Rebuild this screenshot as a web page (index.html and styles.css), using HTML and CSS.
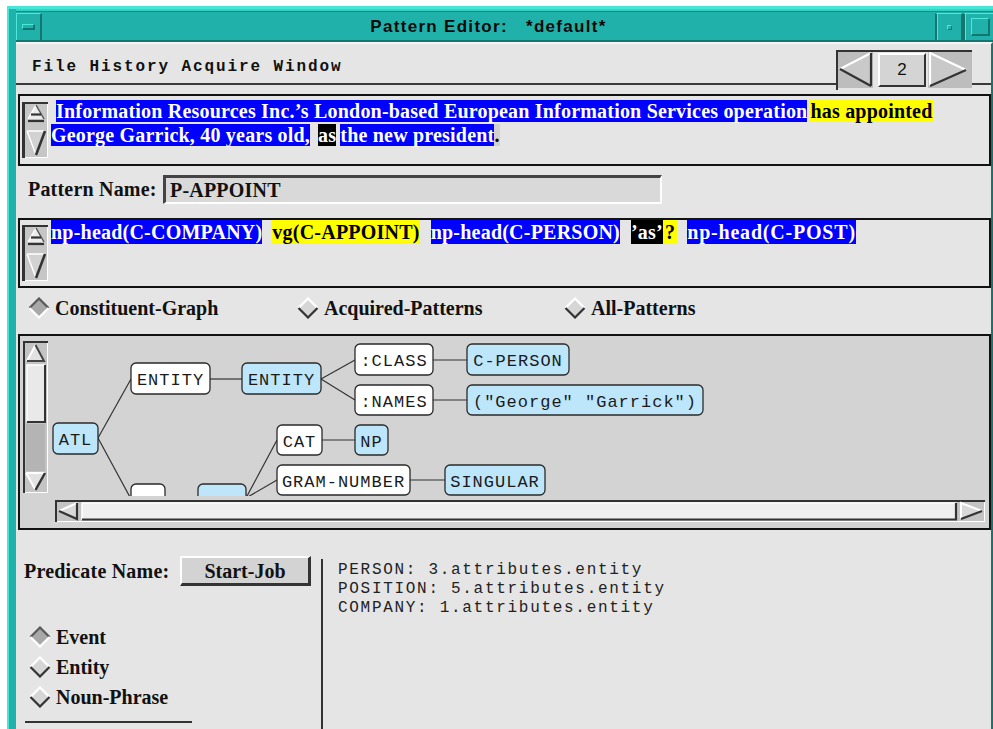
FILE: index.html
```html
<!DOCTYPE html>
<html>
<head>
<meta charset="utf-8">
<title>Pattern Editor</title>
<link rel="stylesheet" href="styles.css">
</head>
<body>
<svg class="sprite" width="0" height="0">
  <defs>
    <symbol id="radio-on" viewBox="0 0 22 22">
      <polygon points="11,1 21,11 11,21 1,11" fill="#a8a8a8"/>
      <path d="M1.5 11L11 1.5L20.5 11" stroke="#5a5a5a" stroke-width="2.2" fill="none"/>
      <path d="M1.5 11L11 20.5L20.5 11" stroke="#ffffff" stroke-width="2.2" fill="none"/>
    </symbol>
    <symbol id="radio-off" viewBox="0 0 22 22">
      <polygon points="11,1 21,11 11,21 1,11" fill="#d6d6d6"/>
      <path d="M1.5 11L11 1.5L20.5 11" stroke="#ffffff" stroke-width="2.2" fill="none"/>
      <path d="M1.5 11L11 20.5L20.5 11" stroke="#333333" stroke-width="2.2" fill="none"/>
    </symbol>
    <symbol id="text-scroll" viewBox="0 0 26 56">
      <rect x="0" y="0" width="26" height="56" fill="#c6c6c6"/>
      <path d="M0 1H26" stroke="#333" stroke-width="2"/>
      <path d="M1.5 0V56" stroke="#333" stroke-width="3"/>
      <path d="M25.5 2V56M3 55.5H26" stroke="#fff" stroke-width="1"/>
      <polygon points="14,3 6,17 22,17" fill="#ececec"/>
      <path d="M6 17L14 3" stroke="#fff" stroke-width="1.5"/>
      <path d="M14 3L22 17" stroke="#555" stroke-width="1.5"/>
      <path d="M9 12.5H19" stroke="#333" stroke-width="2.2"/>
      <path d="M6 19H22" stroke="#333" stroke-width="2.2"/>
      <polygon points="5,29 23,29 14,53" fill="#d2d2d2"/>
      <path d="M5 29H23M5 29L14 53" stroke="#fff" stroke-width="1.5" fill="none"/>
      <path d="M23 29L14 53" stroke="#333" stroke-width="2.6"/>
    </symbol>
  </defs>
</svg>

<div class="window">
  <header class="titlebar">
    <div class="tb-btn tb-menu"><span class="tb-bar"></span></div>
    <div class="tb-title">Pattern Editor:&nbsp;&nbsp;&nbsp;*default*</div>
    <div class="tb-btn tb-min"><span class="tb-dot"></span></div>
    <div class="tb-btn tb-max"><span class="tb-square"></span></div>
  </header>

  <main class="panel">
    <div class="menubar">
      <nav class="menu">File History Acquire Window</nav>
      <div class="pager">
        <div class="pager-arrow prev">
          <svg width="35" height="36" viewBox="0 0 35 36">
            <polygon points="2,17 33,1 33,34" fill="#c9c9c9"/>
            <path d="M2 17L33 1" stroke="#fff" stroke-width="2"/>
            <path d="M2 17L33 34M33 1V34" stroke="#333" stroke-width="2.2" fill="none"/>
          </svg>
        </div>
        <div class="pager-num">2</div>
        <div class="pager-arrow next">
          <svg width="44" height="36" viewBox="0 0 44 36">
            <polygon points="2,1 38,18 2,34" fill="#c9c9c9"/>
            <path d="M2 34V1L38 18" stroke="#fff" stroke-width="2.2" fill="none"/>
            <path d="M38 18L2 34" stroke="#333" stroke-width="2.2"/>
          </svg>
        </div>
      </div>
    </div>

    <section class="textbox sentence">
      <svg class="tscroll" width="26" height="56"><use href="#text-scroll"/></svg>
      <div class="sentence-text">
        <div class="line"><span class="hl blue lead">Information Resources Inc.’s London-based European Information Services operation</span><span class="hl yellow gap-3">has appointed</span></div>
        <div class="line"><span class="hl blue">George Garrick, 40 years old,</span><span class="hl black gap-8">as</span><span class="hl blue gap-4">the new president</span><span class="hl gray">.</span></div>
      </div>
    </section>

    <div class="name-row">
      <label class="field-label">Pattern Name:</label>
      <div class="field-input">P-APPOINT</div>
    </div>

    <section class="textbox pattern">
      <svg class="tscroll" width="26" height="56"><use href="#text-scroll"/></svg>
      <div class="pattern-items">
        <span class="hl blue">np-head(C-COMPANY)</span>
        <span class="hl yellow gap-10">vg(C-APPOINT)</span>
        <span class="hl blue gap-11">np-head(C-PERSON)</span>
        <span class="hl black gap-11">’as’</span>
        <span class="hl yellow optional">?</span>
        <span class="hl blue gap-10 wide">np-head(C-POST)</span>
      </div>
    </section>

    <div class="view-row">
      <div class="radio"><svg class="diamond" width="22" height="22"><use href="#radio-on"/></svg><span>Constituent-Graph</span></div>
      <div class="radio"><svg class="diamond" width="22" height="22"><use href="#radio-off"/></svg><span>Acquired-Patterns</span></div>
      <div class="radio"><svg class="diamond" width="22" height="22"><use href="#radio-off"/></svg><span>All-Patterns</span></div>
    </div>

    <section class="graph">
      <div class="graph-top">
        <svg class="vscroll" width="25" height="152" viewBox="0 0 25 152">
          <rect x="0" y="0" width="25" height="152" fill="#c4c4c4"/>
          <path d="M0 1H25M1 0V152" stroke="#333" stroke-width="2"/>
          <path d="M24.5 2V152M2 151.5H25" stroke="#fff"/>
          <polygon points="12.5,4 4,20 21,20" fill="#e2e2e2"/>
          <path d="M4 20L12.5 4" stroke="#fff" stroke-width="2"/>
          <path d="M12.5 4L21 20H4" stroke="#444" stroke-width="2" fill="none"/>
          <rect x="4" y="24" width="18" height="57" fill="#e9e9e9"/>
          <path d="M4 81V24H22" stroke="#fff" stroke-width="1.5" fill="none"/>
          <path d="M4 81H22V24" stroke="#333" stroke-width="2" fill="none"/>
          <rect x="3" y="83" width="19" height="47" fill="#b4b4b4"/>
          <polygon points="3,132 22,132 12.5,149" fill="#e2e2e2"/>
          <path d="M3 132H22M3 132L12.5 149" stroke="#fff" stroke-width="2" fill="none"/>
          <path d="M22 132L12.5 149" stroke="#333" stroke-width="2.4"/>
        </svg>
        <div class="canvas">
          <svg class="tree" width="939" height="160" viewBox="0 0 939 160">
            <g class="edges">
              <path d="M48 102L81 43"/>
              <path d="M48 102L81 163"/>
              <path d="M160 43H192"/>
              <path d="M271 43L305 24"/>
              <path d="M271 43L305 64"/>
              <path d="M383 24H417"/>
              <path d="M383 64H417"/>
              <path d="M196 162L227 104"/>
              <path d="M196 162L227 144"/>
              <path d="M272 104H305"/>
              <path d="M360 144H395"/>
            </g>
            <g class="node value"><rect x="3" y="87" width="45" height="31" rx="5"/><text x="25.5" y="109">ATL</text></g>
            <g class="node key"><rect x="81" y="27" width="79" height="31" rx="5"/><text x="120.5" y="49">ENTITY</text></g>
            <g class="node value"><rect x="192" y="27" width="79" height="31" rx="5"/><text x="231.5" y="49">ENTITY</text></g>
            <g class="node key"><rect x="305" y="8" width="78" height="31" rx="5"/><text x="344" y="30">:CLASS</text></g>
            <g class="node value"><rect x="417" y="8" width="102" height="31" rx="5"/><text x="468" y="30">C-PERSON</text></g>
            <g class="node key"><rect x="305" y="49" width="78" height="30" rx="5"/><text x="344" y="71">:NAMES</text></g>
            <g class="node value"><rect x="417" y="49" width="236" height="30" rx="5"/><text x="535" y="71">("George" "Garrick")</text></g>
            <g class="node key"><rect x="227" y="89" width="45" height="30" rx="5"/><text x="249.5" y="111">CAT</text></g>
            <g class="node value"><rect x="305" y="89" width="33" height="30" rx="5"/><text x="321.5" y="111">NP</text></g>
            <g class="node key"><rect x="227" y="129" width="133" height="30" rx="5"/><text x="293.5" y="151">GRAM-NUMBER</text></g>
            <g class="node value"><rect x="395" y="129" width="100" height="30" rx="5"/><text x="445" y="151">SINGULAR</text></g>
            <g class="node key"><rect x="81" y="148" width="34" height="30" rx="5"/></g>
            <g class="node value"><rect x="148" y="148" width="48" height="30" rx="5"/></g>
          </svg>
        </div>
      </div>
      <svg class="hscroll" width="930" height="22" viewBox="0 0 930 22">
        <rect x="0" y="0" width="930" height="22" fill="#c4c4c4"/>
        <path d="M0 1H930M1 0V22" stroke="#333" stroke-width="2"/>
        <path d="M929.5 2V22M2 21.5H930" stroke="#fff"/>
        <polygon points="4,11 22,3 22,19" fill="#d8d8d8"/>
        <path d="M4 11L22 3" stroke="#fff" stroke-width="2"/>
        <path d="M4 11L22 19V3" stroke="#333" stroke-width="2.2" fill="none"/>
        <rect x="27" y="3" width="874" height="17" fill="#efefef"/>
        <path d="M27 20V3H901" stroke="#fff" stroke-width="1.5" fill="none"/>
        <path d="M27 19.5H901V3" stroke="#333" stroke-width="2.2" fill="none"/>
        <polygon points="906,3 927,11 906,19" fill="#d8d8d8"/>
        <path d="M906 19V3L927 11" stroke="#fff" stroke-width="2" fill="none"/>
        <path d="M927 11L906 19" stroke="#333" stroke-width="2.2"/>
      </svg>
    </section>

    <div class="lower">
      <div class="lower-left">
        <div class="pred-row">
          <span class="field-label pred-label">Predicate Name:</span>
          <button class="btn">Start-Job</button>
        </div>
        <div class="radio-list">
          <div class="radio"><svg class="diamond" width="22" height="22"><use href="#radio-on"/></svg><span>Event</span></div>
          <div class="radio"><svg class="diamond" width="22" height="22"><use href="#radio-off"/></svg><span>Entity</span></div>
          <div class="radio"><svg class="diamond" width="22" height="22"><use href="#radio-off"/></svg><span>Noun-Phrase</span></div>
        </div>
        <div class="rule"></div>
      </div>
      <pre class="bindings">PERSON: 3.attributes.entity
POSITION: 5.attributes.entity
COMPANY: 1.attributes.entity</pre>
    </div>
  </main>
</div>
</body>
</html>
```

FILE: styles.css
```css
* { box-sizing: border-box; }

html, body {
  margin: 0;
  padding: 0;
}

body {
  background: #ffffff;
  width: 993px;
  height: 729px;
  overflow: hidden;
}

.sprite {
  display: block;
  width: 0;
  height: 0;
  overflow: hidden;
}

/* ---------- window frame ---------- */
.window {
  margin: 6px 0 0 7px;
  width: 986px;
  height: 723px;
  background: #20b2aa;
  border-top: 3px solid #48e6d8;
  border-left: 2px solid #48e6d8;
  padding-left: 7px;
  display: flex;
  flex-direction: column;
}

.titlebar {
  height: 33px;
  flex: none;
  display: flex;
  border-bottom: 2px solid #15756f;
  box-shadow: inset 0 2px 0 #33d2c5, inset 0 3px 0 #178a83;
}

.tb-btn {
  margin-top: 4px;
  display: flex;
  align-items: center;
  justify-content: center;
  border-top: 1px solid #4ce8da;
  border-left: 1px solid #4ce8da;
  border-right: 2px solid #15756f;
}

.tb-menu { width: 26px; }
.tb-min { width: 28px; border-left: 2px solid #15756f; box-shadow: inset 1px 0 0 #4ce8da; }
.tb-max { width: 30px; border-left: 2px solid #15756f; border-right: none; box-shadow: inset 1px 0 0 #4ce8da; }

.tb-bar {
  width: 13px;
  height: 6px;
  background: #20b2aa;
  border-top: 1px solid #4ce8da;
  border-left: 1px solid #4ce8da;
  border-bottom: 2px solid #15756f;
  border-right: 2px solid #15756f;
}

.tb-dot {
  width: 5px;
  height: 5px;
  border-top: 1px solid #4ce8da;
  border-left: 1px solid #4ce8da;
  border-bottom: 1px solid #15756f;
  border-right: 1px solid #15756f;
}

.tb-square {
  width: 19px;
  height: 18px;
  margin-left: 2px;
  border-top: 1px solid #4ce8da;
  border-left: 1px solid #4ce8da;
  border-bottom: 2px solid #15756f;
  border-right: 2px solid #15756f;
}

.tb-title {
  flex: 1;
  text-align: center;
  padding-top: 8px;
  font: bold 17px/20px "Liberation Sans", Arial, sans-serif;
  letter-spacing: 1.3px;
  color: #0a0a0a;
  white-space: nowrap;
}

/* ---------- content panel ---------- */
.panel {
  flex: 1;
  background: #e5e5e5;
  border-top: 2px solid #f6f6f6;
  border-right: 2px solid #15756f;
  display: flex;
  flex-direction: column;
  color: #111;
}

.menubar {
  height: 41px;
  flex: none;
  display: flex;
  align-items: flex-start;
  border-bottom: 2px solid #3a3a3a;
}

.menu {
  padding: 4px 0 0 16px;
  font: bold 16px/39px "Liberation Mono", "Courier New", monospace;
  letter-spacing: 1.9px;
  color: #111;
  white-space: pre;
}

.pager {
  margin: 6px 19px 0 auto;
  width: 136px;
  height: 40px;
  flex: none;
  display: flex;
  align-items: flex-start;
  background: #e5e5e5;
  border-top: 2px solid #333;
  border-left: 2px solid #333;
}

.pager-arrow {
  height: 36px;
  background: #bdbdbd;
}
.pager-arrow svg { display: block; }
.pager-arrow.prev { width: 35px; }
.pager-arrow.next { width: 44px; margin-left: 2px; }

.pager-num {
  margin: 1px 0 0 5px;
  width: 48px;
  height: 34px;
  background: #d4d4d4;
  border-top: 2px solid #fff;
  border-left: 2px solid #fff;
  border-bottom: 2px solid #333;
  border-right: 2px solid #333;
  text-align: center;
  font: 17px/30px "Liberation Sans", Arial, sans-serif;
  color: #111;
}

/* ---------- text boxes ---------- */
.textbox {
  margin-left: 2px;
  border: 2px solid #111;
  display: flex;
  align-items: flex-start;
  flex: none;
}

.tscroll { flex: none; display: block; margin-left: 2px; }

.sentence { margin-top: 9px; height: 72px; }
.sentence .tscroll { margin-top: 6px; }

.sentence-text {
  margin-left: 3px;
  padding-top: 3px;
  font: bold 20px/24px "Liberation Serif", "Times New Roman", serif;
  letter-spacing: 0.2px;
  white-space: nowrap;
}

.pattern { height: 70px; }
.pattern .tscroll { margin-top: 5px; }

.pattern-items {
  margin-left: 3px;
  display: flex;
  align-items: center;
  height: 24px;
  font: bold 20px/24px "Liberation Serif", "Times New Roman", serif;
  letter-spacing: 0.22px;
  white-space: nowrap;
}

.hl { padding: 0; }
.hl.blue { background: #0000ff; color: #fff; }
.hl.yellow { background: #ffff00; color: #000; }
.hl.black { background: #000; color: #fff; }
.hl.gray { background: #d0d0d0; color: #000; }

.hl.optional { padding: 0 2px; }
.hl.wide { letter-spacing: 0.8px; }

.lead { margin-left: 5px; }
.gap-3 { margin-left: 3px; }
.gap-4 { margin-left: 4px; }
.gap-8 { margin-left: 8px; }
.gap-10 { margin-left: 10px; }
.gap-11 { margin-left: 11px; }

/* ---------- pattern name ---------- */
.name-row {
  height: 52px;
  flex: none;
  display: flex;
  align-items: flex-start;
  padding: 9px 0 0 12px;
}

.field-label {
  font: bold 20px/29px "Liberation Serif", "Times New Roman", serif;
  letter-spacing: 0.2px;
  color: #111;
  white-space: nowrap;
}

.name-row .field-label { flex: 0 0 135px; }

.field-input {
  width: 499px;
  height: 29px;
  background: #d9d9d9;
  border-top: 3px solid #444;
  border-left: 3px solid #444;
  border-bottom: 2px solid #fff;
  border-right: 2px solid #fff;
  padding-left: 4px;
  font: bold 20px/24px "Liberation Serif", "Times New Roman", serif;
  letter-spacing: 0.2px;
  color: #111;
}

/* ---------- radios ---------- */
.view-row {
  height: 46px;
  flex: none;
  display: grid;
  grid-template-columns: 269px 267px auto;
  align-items: center;
  padding: 0 0 6px 12px;
}

.radio {
  display: flex;
  align-items: center;
  gap: 5px;
  font: bold 20px/24px "Liberation Serif", "Times New Roman", serif;
  color: #111;
  white-space: nowrap;
}

.diamond { display: block; flex: none; }

/* ---------- constituent graph ---------- */
.graph {
  margin-left: 2px;
  height: 196px;
  flex: none;
  border: 2px solid #111;
  background: #d3d3d3;
  display: flex;
  flex-direction: column;
}

.graph-top {
  height: 160px;
  display: flex;
  align-items: flex-start;
}

.vscroll { display: block; flex: none; margin: 5px 0 0 3px; }

.canvas {
  margin-left: 2px;
  flex: 1;
  height: 160px;
  overflow: hidden;
}

.tree { display: block; }

.edges path {
  stroke: #333;
  stroke-width: 1.2;
  fill: none;
}

.node rect {
  stroke: #2a2a2a;
  stroke-width: 1.3;
}
.node.key rect { fill: #ffffff; }
.node.value rect { fill: #bde6fb; }
.node text {
  font-family: "Liberation Mono", "Courier New", monospace;
  font-size: 17px;
  letter-spacing: 1px;
  fill: #1a1a1a;
  text-anchor: middle;
}

.hscroll { display: block; margin: 4px 0 0 35px; }

/* ---------- predicate area ---------- */
.lower {
  flex: 1;
  display: flex;
  align-items: flex-start;
}

.lower-left {
  width: 305px;
  flex: none;
  padding-left: 8px;
}

.pred-row {
  margin-top: 26px;
  height: 30px;
  display: flex;
  align-items: center;
}

.pred-label { flex: 0 0 156px; }

.btn {
  width: 131px;
  height: 30px;
  padding: 0;
  background: #d3d3d3;
  border-top: 2px solid #fff;
  border-left: 2px solid #fff;
  border-bottom: 3px solid #333;
  border-right: 3px solid #333;
  font: bold 20px/24px "Liberation Serif", "Times New Roman", serif;
  color: #111;
}

.radio-list {
  margin-top: 36px;
  padding-left: 5px;
}
.radio-list .radio { height: 30px; }

.rule {
  margin: 9px 0 0 1px;
  width: 167px;
  border-top: 2px solid #333;
}

.bindings {
  margin: 29px 0 0 0;
  flex: 1;
  align-self: stretch;
  border-left: 2px solid #333;
  padding: 2px 0 0 15px;
  font: 16px/19px "Liberation Mono", "Courier New", monospace;
  letter-spacing: 1.7px;
  color: #222;
}
```
